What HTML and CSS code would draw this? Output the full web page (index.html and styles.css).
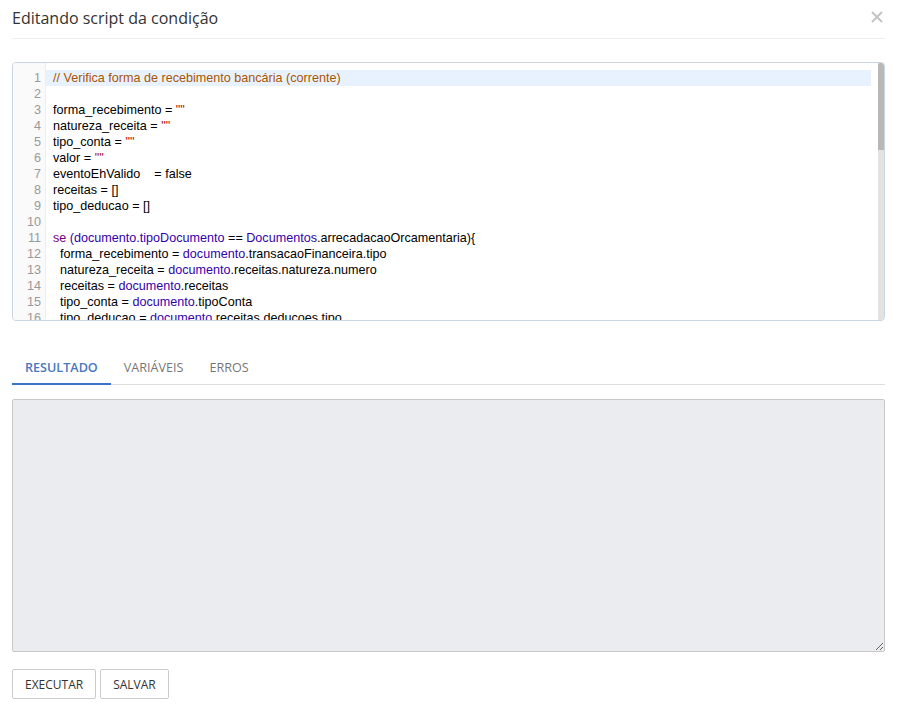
FILE: index.html
```html
<!DOCTYPE html>
<html lang="pt-BR">
<head>
  <meta charset="UTF-8">
  <title>Editando script da condição</title>
  <link rel="stylesheet" href="styles.css">
</head>
<body>
  <div class="modal">
    <div class="modal-header">
      <h1>Editando script da condição</h1>
      <span class="close">
        <svg width="12" height="12" viewBox="0 0 12 12"><path d="M1 1L11 11M11 1L1 11" stroke="#c4c4c4" stroke-width="2"/></svg>
      </span>
    </div>

    <!-- editor de script -->
    <div class="editor">
      <div class="gutter">
        <div>1</div><div>2</div><div>3</div><div>4</div><div>5</div><div>6</div><div>7</div><div>8</div>
        <div>9</div><div>10</div><div>11</div><div>12</div><div>13</div><div>14</div><div>15</div><div>16</div>
      </div>
      <div class="code">
        <div class="line active"><span class="cm-comment">// Verifica forma de recebimento bancária (corrente)</span></div>
        <div class="line"> </div>
        <div class="line">forma_recebimento = <span class="cm-string">""</span></div>
        <div class="line">natureza_receita = <span class="cm-string">""</span></div>
        <div class="line">tipo_conta = <span class="cm-string">""</span></div>
        <div class="line">valor = <span class="cm-string">""</span></div>
        <div class="line">eventoEhValido    = false</div>
        <div class="line">receitas = []</div>
        <div class="line">tipo_deducao = []</div>
        <div class="line"> </div>
        <div class="line"><span class="cm-keyword">se</span> <span class="cm-var">(documento.tipoDocumento</span> == <span class="cm-var">Documentos</span>.arrecadacaoOrcamentaria){</div>
        <div class="line">  forma_recebimento = <span class="cm-var">documento</span>.transacaoFinanceira.tipo</div>
        <div class="line">  natureza_receita = <span class="cm-var">documento</span>.receitas.natureza.numero</div>
        <div class="line">  receitas = <span class="cm-var">documento</span>.receitas</div>
        <div class="line">  tipo_conta = <span class="cm-var">documento</span>.tipoConta</div>
        <div class="line">  tipo_deducao = <span class="cm-var">documento</span>.receitas.deducoes.tipo</div>
      </div>
      <div class="scrollbar"><div class="thumb"></div></div>
    </div>

    <!-- abas -->
    <div class="tabs">
      <span class="tab active">Resultado</span>
      <span class="tab">Variáveis</span>
      <span class="tab">Erros</span>
    </div>

    <textarea class="result" readonly></textarea>

    <div class="actions">
      <button type="button">Executar</button>
      <button type="button">Salvar</button>
    </div>
  </div>
</body>
</html>
```

FILE: styles.css
```css
body {
  margin: 0;
  font-family: "Open Sans", sans-serif;
  color: #333;
  background: #fff;
}
.modal {
  padding: 0 12px;
}
.modal-header {
  height: 38px;
  border-bottom: 1px solid #eee;
  display: flex;
  align-items: center;
  justify-content: space-between;
}
.modal-header h1 {
  margin: 0;
  font-size: 16px;
  font-weight: normal;
  color: #333;
  line-height: 36px;
  margin-top: -3px;
}
.close {
  display: flex;
  margin-right: 2px;
  margin-top: -4px;
}
.editor {
  margin-top: 23px;
  height: 257px;
  border: 1px solid #c8d5e2;
  border-radius: 4px;
  display: flex;
  overflow: hidden;
  font-family: "Liberation Sans", Arial, sans-serif;
  font-size: 12.6px;
  line-height: 16px;
}
.gutter {
  width: 32px;
  border-right: 1px solid #eee;
  background: #fafafa;
  padding-top: 7px;
  text-align: right;
  color: #999;
}
.gutter div {
  padding-right: 4px;
  height: 16px;
}
.code {
  flex: 1;
  padding-top: 7px;
  padding-right: 7px;
  overflow: hidden;
  color: #000;
}
.line {
  white-space: pre;
  padding-left: 7px;
  height: 16px;
}
.line.active {
  background: #e8f2ff;
}
.cm-comment { color: #a50; }
.cm-string { color: #a11; }
.cm-keyword { color: #708; }
.cm-var { color: #30a; }
.scrollbar {
  width: 6px;
  background: #e2e2e2;
}
.thumb {
  height: 87px;
  background: #b8b8b8;
  border-radius: 2px 2px 0 0;
}
.tabs {
  margin-top: 29px;
  display: flex;
  border-bottom: 1px solid #ddd;
}
.tab {
  padding: 9px 13px 6px;
  font-size: 12.6px;
  line-height: 18px;
  text-transform: uppercase;
  color: #777;
  border-bottom: 2px solid transparent;
  margin-bottom: -1px;
}
.tab.active {
  color: #4a77c0;
  font-weight: 600;
  border-bottom-color: #3a74c9;
}
.result {
  display: block;
  margin-top: 14px;
  width: 100%;
  height: 253px;
  box-sizing: border-box;
  background: #ebecef;
  border: 1px solid #c8c8c8;
  border-radius: 2px;
  resize: vertical;
}
.actions {
  margin-top: 17px;
  display: flex;
  gap: 4px;
}
.actions button {
  height: 30px;
  padding: 0 12px;
  background: #fff;
  border: 1px solid #ccc;
  border-radius: 2px;
  font-family: "Open Sans", sans-serif;
  font-size: 12px;
  text-transform: uppercase;
  color: #333;
}
```
